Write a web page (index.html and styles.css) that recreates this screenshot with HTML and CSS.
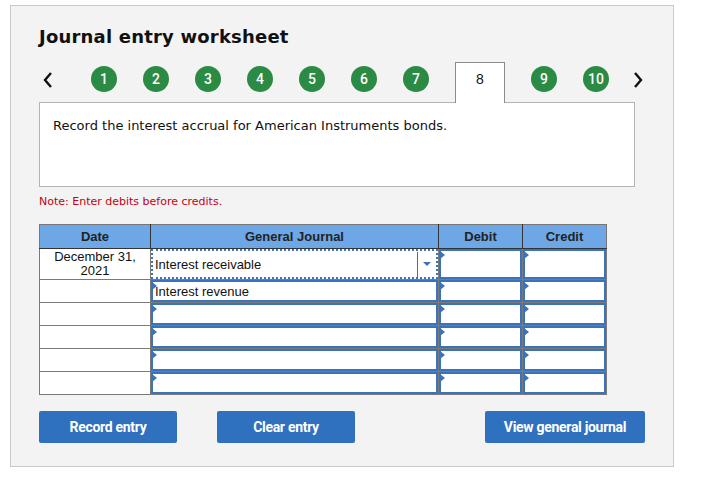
FILE: index.html
```html
<!DOCTYPE html>
<html>
<head>
<meta charset="utf-8">
<link rel="stylesheet" href="styles.css">
</head>
<body>
<div class="panel">
  <h1 class="title">Journal entry worksheet</h1>
  <div class="nav">
    <span class="arrow prev"><svg width="12" height="18" viewBox="0 0 12 18"><polyline points="9,2 3,9 9,16" fill="none" stroke="#111" stroke-width="2.4"/></svg></span>
    <span class="step">1</span>
    <span class="step">2</span>
    <span class="step">3</span>
    <span class="step">4</span>
    <span class="step">5</span>
    <span class="step">6</span>
    <span class="step">7</span>
    <span class="tab">8</span>
    <span class="step">9</span>
    <span class="step">10</span>
    <span class="arrow next"><svg width="12" height="18" viewBox="0 0 12 18"><polyline points="3,2 9,9 3,16" fill="none" stroke="#111" stroke-width="2.4"/></svg></span>
  </div>
  <div class="prompt">Record the interest accrual for American Instruments bonds.</div>
  <p class="note">Note: Enter debits before credits.</p>
  <table class="journal">
    <colgroup>
      <col class="c-date"><col class="c-gj"><col class="c-dr"><col class="c-cr">
    </colgroup>
    <thead>
      <tr><th>Date</th><th>General Journal</th><th>Debit</th><th>Credit</th></tr>
    </thead>
    <tbody>
      <tr class="first">
        <td class="date">December 31,<br>2021</td>
        <td class="in"><div class="box select"><span class="val">Interest receivable</span><span class="caret"></span></div></td>
        <td class="in"><div class="box"><i class="mark"></i></div></td>
        <td class="in"><div class="box"><i class="mark"></i></div></td>
      </tr>
      <tr>
        <td class="date"></td>
        <td class="in"><div class="box"><i class="mark"></i><span class="val">Interest revenue</span></div></td>
        <td class="in"><div class="box"><i class="mark"></i></div></td>
        <td class="in"><div class="box"><i class="mark"></i></div></td>
      </tr>
      <tr>
        <td class="date"></td>
        <td class="in"><div class="box"><i class="mark"></i></div></td>
        <td class="in"><div class="box"><i class="mark"></i></div></td>
        <td class="in"><div class="box"><i class="mark"></i></div></td>
      </tr>
      <tr>
        <td class="date"></td>
        <td class="in"><div class="box"><i class="mark"></i></div></td>
        <td class="in"><div class="box"><i class="mark"></i></div></td>
        <td class="in"><div class="box"><i class="mark"></i></div></td>
      </tr>
      <tr>
        <td class="date"></td>
        <td class="in"><div class="box"><i class="mark"></i></div></td>
        <td class="in"><div class="box"><i class="mark"></i></div></td>
        <td class="in"><div class="box"><i class="mark"></i></div></td>
      </tr>
      <tr>
        <td class="date"></td>
        <td class="in"><div class="box"><i class="mark"></i></div></td>
        <td class="in"><div class="box"><i class="mark"></i></div></td>
        <td class="in"><div class="box"><i class="mark"></i></div></td>
      </tr>
    </tbody>
  </table>
  <div class="actions">
    <button class="btn">Record entry</button>
    <button class="btn">Clear entry</button>
    <button class="btn wide">View general journal</button>
  </div>
</div>
</body>
</html>
```

FILE: styles.css
```css
* { box-sizing: border-box; }
html, body { margin: 0; padding: 0; background: #fff; }
body { font-family: "DejaVu Sans", Verdana, sans-serif; }

.panel {
  margin: 5px 0 0 10px;
  width: 664px;
  height: 462px;
  background: #f3f3f3;
  border: 1px solid #c9c9c9;
  padding: 20px 0 0 28px;
}

.title {
  margin: 0;
  font-size: 18px;
  line-height: 22px;
  font-weight: bold;
  color: #111;
  letter-spacing: 0.2px;
}

.nav {
  display: flex;
  align-items: center;
  height: 40px;
  margin-top: 14px;
  gap: 26px;
  position: relative;
  z-index: 1;
}
.arrow { display: flex; align-items: center; height: 18px; margin-bottom: 5px; }
.prev { width: 23px; margin-left: 3px; }
.next { margin-left: -3px; }

.step {
  width: 26px;
  height: 26px;
  border-radius: 50%;
  background: #2b8a43;
  color: #fff;
  font-family: Roboto, "Liberation Sans", sans-serif;
  font-weight: 500;
  font-size: 14px;
  display: flex;
  align-items: center;
  justify-content: center;
  margin-bottom: 6px;
}

.tab {
  align-self: stretch;
  width: 50px;
  height: 41px;
  margin-bottom: -1px;
  background: #fff;
  border: 1px solid #8c8c8c;
  border-bottom: none;
  display: flex;
  justify-content: center;
  padding-top: 8px;
  font-family: "Liberation Sans", Arial, sans-serif;
  font-size: 14px;
  color: #111;
}

.prompt {
  width: 596px;
  height: 85px;
  background: #fff;
  border: 1px solid #b3b3b3;
  padding: 15px 0 0 13px;
  font-size: 13px;
  color: #111;
}

.note {
  margin: 8px 0 0 0;
  font-size: 11px;
  line-height: 14px;
  color: #c8000b;
}

.journal {
  margin-top: 15px;
  border-collapse: collapse;
  table-layout: fixed;
  width: 567px;
  font-family: "Liberation Sans", Arial, sans-serif;
  font-size: 13px;
  color: #111;
  background: #fff;
}
.c-date { width: 111px; }
.c-gj { width: 288px; }
.c-dr { width: 84px; }
.c-cr { width: 84px; }

.journal th {
  height: 24px;
  background: #6ea7e6;
  border: 1px solid #333;
  border-top-color: #777;
  font-weight: bold;
  font-size: 13px;
  color: #222;
  padding: 0;
}
.journal th:first-child { border-left-color: #777; }
.journal th:last-child { border-right-color: #777; }

.journal td {
  border: 1px solid #7a7a7a;
  padding: 0;
  height: 23px;
}
.journal tr.first td { height: 31px; }

.date {
  text-align: center;
  line-height: 14px;
  vertical-align: top;
  padding-top: 1px !important;
}

.in { position: relative; }
.box {
  position: relative;
  height: 100%;
  border: 2px solid #3a72bb;
  display: flex;
  align-items: center;
  padding-left: 2px;
}
.mark {
  position: absolute;
  left: -1px;
  top: 0;
  width: 0;
  height: 0;
  border-top: 4px solid transparent;
  border-bottom: 4px solid transparent;
  border-left: 5px solid #3a72bb;
}

.select {
  border: 2px dotted #3a72bb;
}
.select .val { flex: 1; }
.caret {
  width: 19px;
  height: 25px;
  border-left: 1px solid #3a72bb;
  display: flex;
  align-items: center;
  justify-content: center;
}
.caret::after {
  content: "";
  width: 0;
  height: 0;
  border-left: 4px solid transparent;
  border-right: 4px solid transparent;
  border-top: 4px solid #3a72bb;
}

.actions {
  display: flex;
  margin-top: 16px;
}
.btn {
  width: 138px;
  height: 32px;
  background: #2f70bf;
  color: #fff;
  border: none;
  border-radius: 2px;
  font-family: Roboto, "Liberation Sans", sans-serif;
  font-weight: bold;
  font-size: 14px;
  letter-spacing: -0.3px;
  padding: 0;
  margin-right: 40px;
}
.btn.wide { width: 160px; margin-left: 90px; margin-right: 0; }
```
